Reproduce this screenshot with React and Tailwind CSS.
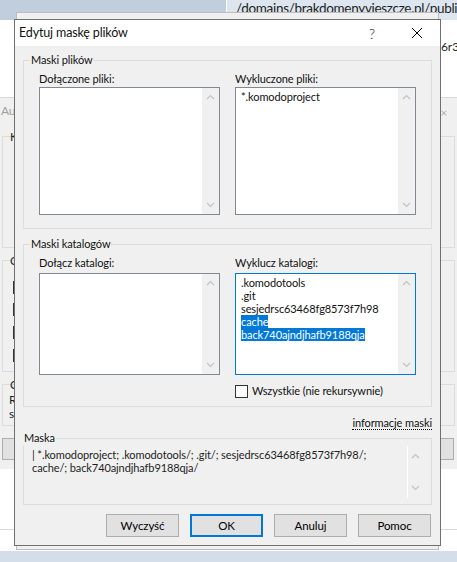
import React from "react";

const Up = () => (
  <svg width="9" height="6" viewBox="0 0 9 6" className="block">
    <path d="M1 5 L4.5 1.5 L8 5" fill="none" stroke="#c2c2c2" strokeWidth="1.2" />
  </svg>
);

const Down = () => (
  <svg width="9" height="6" viewBox="0 0 9 6" className="block">
    <path d="M1 1 L4.5 4.5 L8 1" fill="none" stroke="#c2c2c2" strokeWidth="1.2" />
  </svg>
);

const ScrollBar = () => (
  <div className="w-[17px] bg-[#f0f0f0] flex flex-col justify-between items-center py-[6px]">
    <Up />
    <Down />
  </div>
);

const ListBox = ({ h, focused, children }) => (
  <div
    className={`flex bg-white border ${focused ? "border-[#0078d7]" : "border-[#828790]"} ${h}`}
  >
    <div className="flex-1 pt-[2px] pl-[5px] leading-[13px] whitespace-nowrap">{children}</div>
    <ScrollBar />
  </div>
);

const Group = ({ title, children, className = "" }) => (
  <fieldset className={`border border-[#dcdcdc] px-[15px] ${className}`}>
    <legend className="ml-[-9px] px-[1px] leading-[16px]">{title}</legend>
    {children}
  </fieldset>
);

const Btn = ({ children, primary }) => (
  <button
    className={`w-[73px] h-[23px] bg-[#e1e1e1] ${
      primary ? "border-2 border-[#0078d7]" : "border border-[#adadad]"
    } text-[11.5px] tracking-[-0.1px] text-black`}
  >
    {children}
  </button>
);

export default function App() {
  return (
    <div className="relative w-[457px] h-[562px] overflow-hidden bg-white text-[11px] tracking-[-0.1px] text-[#111] font-['Segoe_UI','Lato',sans-serif]">
      {/* desktop behind the dialog */}
      <div className="absolute left-0 top-0 w-[226px] h-[20px] bg-[#c0cedd]" />
      <div className="absolute left-[227px] top-0 w-[230px] h-[20px] bg-[#dde6ef] pl-[9px] text-[13.5px] tracking-[-0.3px] leading-[17px] text-[#1e1e1e] whitespace-nowrap overflow-hidden">
        /domains/brakdomenyvieszcze.pl/public_h
      </div>
      <div className="absolute left-[441px] top-[38px] w-[16px] overflow-hidden text-[12px] text-[#1e1e1e]">6r3g</div>
      <div className="absolute left-0 top-[97px] w-[457px] h-[372px] bg-[#f0f0f0] border-t border-[#d9d9d9] text-[12px]">
        <div className="pl-[1px] pt-[4px] text-[#a0a0a0]">Aut</div>
        <div className="absolute right-[10px] top-[6px] text-[#b0b0b0]">×</div>
        <div className="absolute left-[2px] top-[38px] w-[453px] h-[112px] border border-[#dcdcdc]">
          <div className="absolute left-[7px] top-[-9px] text-[#1e1e1e]">K</div>
          <div className="absolute left-[11px] top-[17px] w-[4px] h-[14px] bg-[#c8a063]" />
          <div className="absolute left-[11px] top-[31px] w-[4px] h-[10px] bg-[#b33a2a]" />
        </div>
        <div className="absolute left-[2px] top-[162px] w-[453px] h-[112px] border border-[#dcdcdc]">
          <div className="absolute left-[7px] top-[-9px] text-[#1e1e1e]">O</div>
          <div className="absolute left-[10px] top-[20px] w-[6px] h-[13px] border border-[#333]" />
          <div className="absolute left-[10px] top-[42px] w-[6px] h-[13px] border border-[#333]" />
          <div className="absolute left-[10px] top-[65px] w-[6px] h-[13px] border border-[#333]" />
          <div className="absolute left-[10px] top-[88px] w-[6px] h-[13px] border border-[#333]" />
        </div>
        <div className="absolute left-[2px] top-[286px] w-[453px] h-[42px] border border-[#dcdcdc]">
          <div className="absolute left-[7px] top-[-9px] text-[#1e1e1e]">O</div>
          <div className="absolute left-[6px] top-[8px] leading-[14px] text-[#1e1e1e]">
            <div>R</div>
            <div>se</div>
          </div>
        </div>
        <div className="absolute left-[2px] top-[340px] w-[452px] h-[22px] bg-[#e1e1e1] border border-[#adadad]" />
      </div>
      <div className="absolute left-0 top-[529px] w-[457px] h-[1px] bg-[#d9d9d9]" />
      <div className="absolute left-0 top-[551px] w-[457px] h-[11px] bg-[#d3deea]" />

      {/* window directly behind */}
      <div className="absolute left-[16px] top-[12px] w-[423px] h-[538px] bg-[#f0f0f0] border border-[#bdbdbd]" />

      {/* dialog */}
      <div className="absolute left-[14px] top-[19px] w-[427px] h-[527px] bg-[#f0f0f0] border border-[#6f6f6f] flex flex-col">
        <div className="h-[26px] bg-white flex items-center pl-[4px] shrink-0">
          <span className="flex-1 pt-[1px] text-[12.5px] tracking-[-0.15px]">Edytuj maskę plików</span>
          <span className="w-[30px] mr-[7px] text-center text-[14px] font-light">?</span>
          <span className="w-[46px] flex justify-center">
            <svg width="12" height="12" viewBox="0 0 12 12">
              <path d="M1 1 L11 11 M11 1 L1 11" stroke="#000" strokeWidth="1" />
            </svg>
          </span>
        </div>

        <div className="flex flex-col px-[8px] pt-[6px]">
          <Group title="Maski plików" className="pb-[13px]">
            <div className="grid grid-cols-2 gap-[15px] pt-[3px]">
              <div>
                <div className="h-[16px] leading-[16px]">Dołączone pliki:</div>
                <ListBox h="h-[128px]" />
              </div>
              <div>
                <div className="h-[16px] leading-[16px]">Wykluczone pliki:</div>
                <ListBox h="h-[128px]">*.komodoproject</ListBox>
              </div>
            </div>
          </Group>

          <Group title="Maski katalogów" className="mt-[7px] pb-[8px]">
            <div className="grid grid-cols-2 gap-[15px] pt-[3px]">
              <div>
                <div className="h-[16px] leading-[16px]">Dołącz katalogi:</div>
                <div className="mt-[2px]">
                  <ListBox h="h-[102px]" />
                </div>
              </div>
              <div>
                <div className="h-[16px] leading-[16px]">Wyklucz katalogi:</div>
                <div className="mt-[2px]">
                  <ListBox h="h-[102px]" focused>
                    <div>.komodotools</div>
                    <div>.git</div>
                    <div>sesjedrsc63468fg8573f7h98</div>
                    <div>
                      <span className="bg-[#0078d7] text-white">cache</span>
                    </div>
                    <div>
                      <span className="bg-[#0078d7] text-white">back740ajndjhafb9188qja</span>
                    </div>
                  </ListBox>
                </div>
                <div className="flex items-center gap-[4px] mt-[9px]">
                  <div className="w-[13px] h-[13px] bg-white border border-[#333]" />
                  <span className="leading-[14px]">Wszystkie (nie rekursywnie)</span>
                </div>
              </div>
            </div>
          </Group>

          <div className="flex justify-end mt-[9px] h-[14px]">
            <span className="leading-[13px] border-b border-dotted border-black">informacje maski</span>
          </div>

          <Group title="Maska" className="pl-[8px] pr-[8px] pb-[6px]">
            <div className="flex h-[52px]">
              <div className="flex-1 leading-[13px] pt-[2px] text-[#1e1e1e] whitespace-nowrap">
                | *.komodoproject; .komodotools/; .git/; sesjedrsc63468fg8573f7h98/;
                <br />
                cache/; back740ajndjhafb9188qja/
              </div>
              <div className="w-[16px] border-l border-white flex flex-col justify-between items-center py-[7px]">
                <Up />
                <Down />
              </div>
            </div>
          </Group>

          <div className="flex justify-end gap-[11px] mt-[9px] pr-[1px]">
            <Btn>Wyczyść</Btn>
            <Btn primary>OK</Btn>
            <Btn>Anuluj</Btn>
            <Btn>Pomoc</Btn>
          </div>
        </div>
      </div>
    </div>
  );
}
